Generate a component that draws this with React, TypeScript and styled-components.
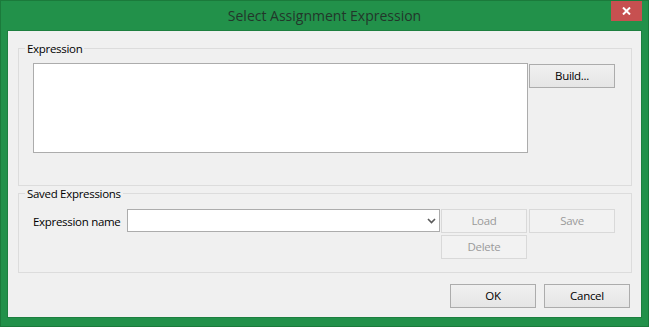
import React from "react";
import styled, { createGlobalStyle } from "styled-components";

const Global = createGlobalStyle`
  html, body { margin: 0; padding: 0; background: #ffffff; }
  body { font-family: "Open Sans", "Noto Sans", sans-serif; }
  * { box-sizing: border-box; }
`;

const Window = styled.div`
  width: 649px;
  height: 327px;
  background: #22914a;
  border: 1px solid #1b7a3b;
  padding: 0 7px 9px;
  display: flex;
  flex-direction: column;
`;

const TitleBar = styled.div`
  height: 30px;
  flex: none;
  display: grid;
  grid-template-columns: 1fr auto 1fr;
  align-items: start;
`;

const Title = styled.div`
  grid-column: 2;
  font-size: 14px;
  line-height: 30px;
  color: #22362a;
  white-space: nowrap;
`;

const CloseButton = styled.div`
  grid-column: 3;
  justify-self: end;
  margin-right: -1px;
  width: 31px;
  height: 20px;
  background: #c75050;
  display: flex;
  align-items: center;
  justify-content: center;
`;

const Client = styled.div`
  flex: 1;
  background: #f0f0f0;
  box-shadow: 0 0 0 1px #1d7f3f;
  padding: 10px 9px 0 10px;
  display: flex;
  flex-direction: column;
  font-size: 11.5px;
  letter-spacing: -0.3px;
  color: #000;
`;

const Group = styled.fieldset<{ $h: number }>`
  margin: 0;
  border: 1px solid #dcdcdc;
  padding: 0 0 0 14px;
  height: ${(p) => p.$h}px;
  min-width: 0;
`;

const Legend = styled.legend`
  margin-left: -8px;
  padding: 0 2px;
  line-height: 15px;
  font-size: 11.5px;
`;

const ExprRow = styled.div`
  display: flex;
  align-items: flex-start;
  gap: 1px;
  padding-top: 7px;
`;

const ExprBox = styled.div`
  width: 495px;
  height: 90px;
  background: #ffffff;
  border: 1px solid #acacac;
`;

const Button = styled.div<{ $disabled?: boolean; $mt?: number }>`
  width: 86px;
  height: 24px;
  margin-top: ${(p) => p.$mt ?? 0}px;
  border: 1px solid ${(p) => (p.$disabled ? "#d9d9d9" : "#acacac")};
  background: ${(p) =>
    p.$disabled ? "#f2f2f2" : "linear-gradient(#f0f0f0, #e5e5e5)"};
  color: ${(p) => (p.$disabled ? "#9a9a9a" : "#000")};
  display: flex;
  align-items: center;
  justify-content: center;
  line-height: 1;
  font-size: 11.5px;
`;

const SavedGrid = styled.div`
  display: grid;
  justify-content: start;
  grid-template-columns: 93px 313px 86px 86px;
  grid-template-rows: 24px 24px;
  column-gap: 1px;
  row-gap: 2px;
  padding-top: 8px;
  align-items: center;
`;

const Label = styled.div`
  white-space: nowrap;
`;

const Combo = styled.div`
  height: 23px;
  align-self: start;
  background: #ffffff;
  border: 1px solid #acacac;
  display: flex;
  align-items: center;
  justify-content: flex-end;
  padding-right: 3px;
`;

const LoadCell = styled.div`
  grid-column: 3;
`;

const SaveCell = styled.div`
  grid-column: 4;
  padding-left: 1px;
`;

const DeleteCell = styled.div`
  grid-column: 3;
  grid-row: 2;
`;

const Footer = styled.div`
  display: flex;
  justify-content: flex-end;
  gap: 8px;
  padding: 11px 2px 0 0;
`;

export default function App() {
  return (
    <>
      <Global />
      <Window>
        <TitleBar>
          <Title>Select Assignment Expression</Title>
          <CloseButton>
            <svg width="9" height="8" viewBox="0 0 9 8">
              <path d="M1 0.5 L8 7.5 M8 0.5 L1 7.5" stroke="#ffffff" strokeWidth="2" />
            </svg>
          </CloseButton>
        </TitleBar>
        <Client>
          <Group $h={145}>
            <Legend>Expression</Legend>
            <ExprRow>
              <ExprBox />
              <Button $mt={1}>Build...</Button>
            </ExprRow>
          </Group>
          <Group $h={87}>
            <Legend>Saved Expressions</Legend>
            <SavedGrid>
              <Label>Expression name</Label>
              <Combo>
                <svg width="9" height="6" viewBox="0 0 9 6">
                  <path d="M1 1 L4.5 4.5 L8 1" fill="none" stroke="#5a5a5a" strokeWidth="1.6" />
                </svg>
              </Combo>
              <LoadCell>
                <Button $disabled>Load</Button>
              </LoadCell>
              <SaveCell>
                <Button $disabled>Save</Button>
              </SaveCell>
              <DeleteCell>
                <Button $disabled>Delete</Button>
              </DeleteCell>
            </SavedGrid>
          </Group>
          <Footer>
            <Button>OK</Button>
            <Button>Cancel</Button>
          </Footer>
        </Client>
      </Window>
    </>
  );
}
